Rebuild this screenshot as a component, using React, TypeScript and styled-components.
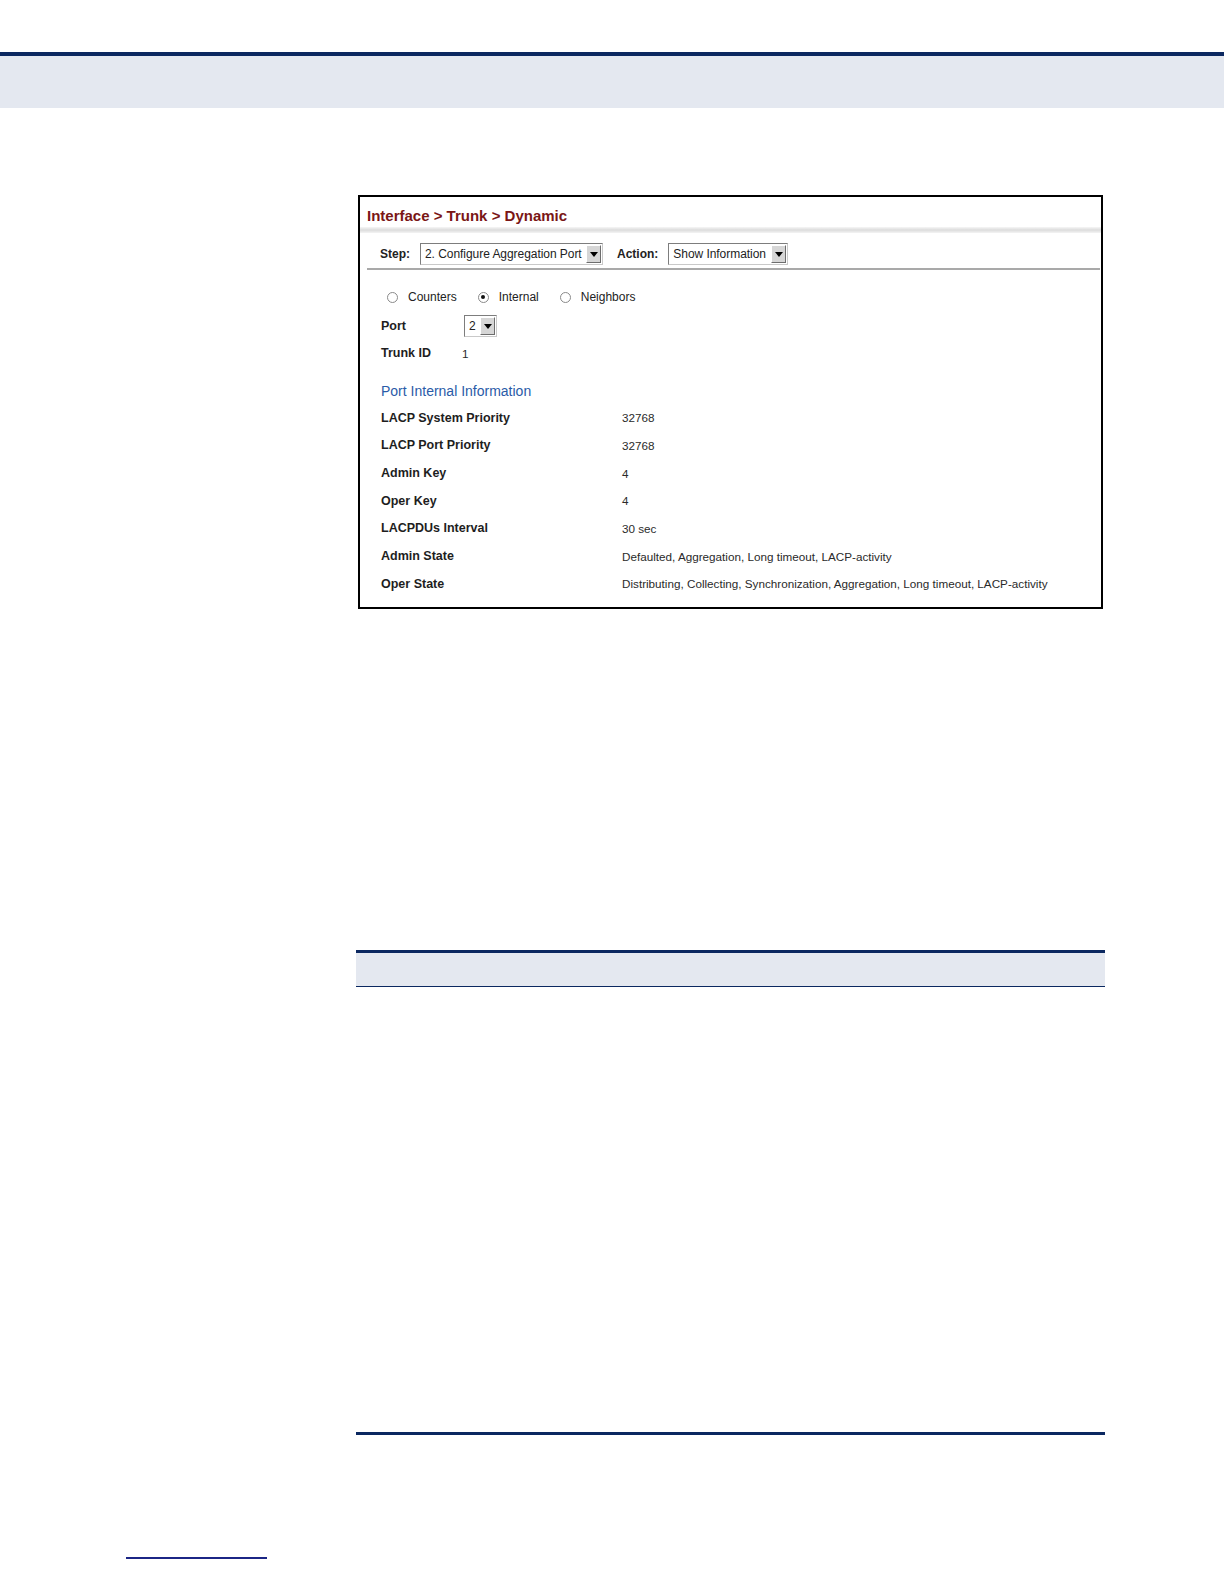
import React from "react";
import styled, { createGlobalStyle } from "styled-components";

const GlobalStyle = createGlobalStyle`
  html, body {
    margin: 0;
    padding: 0;
    background: #ffffff;
  }
  body {
    font-family: "Liberation Sans", Arial, sans-serif;
    color: #1a1a1a;
  }
`;

const Page = styled.div`
  width: 1224px;
  padding-top: 52px;
`;

const HeaderBand = styled.div`
  height: 52px;
  border-top: 4px solid #0b2860;
  background: #e4e8f0;
`;

const Body = styled.div`
  padding-left: 358px;
  padding-top: 87px;
`;

const Shot = styled.div`
  width: 745px;
  height: 414px;
  box-sizing: border-box;
  border: 2px solid #000;
  background: #fff;
  overflow: hidden;
`;

const TitleBar = styled.div`
  height: 30px;
  padding: 10px 0 0 7px;
  box-sizing: border-box;
  font-size: 15px;
  line-height: 17px;
  font-weight: bold;
  color: #7a1616;
`;

const Shade = styled.div`
  height: 6px;
  background: linear-gradient(#f6f6f6, #dcdcdc 50%, #f4f4f4);
`;

const Toolbar = styled.div`
  display: flex;
  align-items: center;
  height: 22px;
  margin: 0 1px 0 7px;
  padding: 10px 0 3px 13px;
  border-bottom: 2px solid #a9a9a9;
  gap: 6px;
`;

const ToolLabel = styled.span<{ $gap?: number }>`
  font-size: 12px;
  font-weight: bold;
  color: #222;
  margin-left: ${(p) => p.$gap ?? 0}px;
  margin-right: 4px;
`;

const Select = styled.div<{ $w: number }>`
  width: ${(p) => p.$w}px;
  height: 22px;
  box-sizing: border-box;
  display: flex;
  align-items: stretch;
  border: 1px solid #7d7d7d;
  border-right-color: #c9c9c9;
  border-bottom-color: #c9c9c9;
  background: #fff;
`;

const SelectText = styled.span`
  flex: 1;
  font-size: 12px;
  line-height: 20px;
  padding-left: 4px;
  color: #222;
  white-space: nowrap;
  overflow: hidden;
  letter-spacing: -0.05px;
`;

const ArrowBtn = styled.span`
  width: 15px;
  margin: 1px;
  box-sizing: border-box;
  background: #d6d6d6;
  border: 1px solid #fff;
  border-right-color: #6d6d6d;
  border-bottom-color: #6d6d6d;
  display: flex;
  align-items: center;
  justify-content: center;
`;

const Content = styled.div`
  padding: 20px 0 0 21px;
`;

const RadioRow = styled.div`
  display: flex;
  align-items: center;
  height: 14px;
  padding-left: 6px;
  margin-bottom: 8px;
`;

const RadioItem = styled.label`
  display: flex;
  align-items: center;
  font-size: 12px;
  color: #222;
  margin-right: 21px;
`;

const RadioDot = styled.span<{ $on?: boolean }>`
  width: 11px;
  height: 11px;
  box-sizing: border-box;
  border-radius: 50%;
  border: 1px solid #8a8a8a;
  background: #fff;
  margin-right: 10px;
  display: flex;
  align-items: center;
  justify-content: center;
  &::after {
    content: "";
    width: 4px;
    height: 4px;
    border-radius: 50%;
    background: ${(p) => (p.$on ? "#111" : "transparent")};
  }
`;

const FieldRow = styled.div<{ $h: number }>`
  display: flex;
  align-items: center;
  height: ${(p) => p.$h}px;
`;

const FieldLabel = styled.span<{ $w: number }>`
  width: ${(p) => p.$w}px;
  flex-shrink: 0;
  font-size: 12.5px;
  font-weight: bold;
  color: #1e1e1e;
`;

const FieldValue = styled.span`
  font-size: 11.7px;
  color: #2a2a2a;
  white-space: nowrap;
`;

const SectionTitle = styled.div`
  font-size: 14px;
  line-height: 16px;
  color: #2a5ba8;
  margin: 17px 0 5px;
`;

const Band = styled.div`
  margin: 341px 0 0 -2px;
  width: 749px;
  height: 33px;
  border-top: 3px solid #0b2860;
  border-bottom: 1px solid #0b2860;
  background: #e4e8f0;
`;

const EndRule = styled.div`
  margin: 445px 0 0 -2px;
  width: 749px;
  height: 3px;
  background: #0b2860;
`;

const FootRule = styled.div`
  margin: 122px 0 0 126px;
  width: 141px;
  height: 2px;
  background: #1b2585;
`;

const Arrow = () => (
  <svg width="8" height="5" viewBox="0 0 8 5">
    <path d="M0 0H8L4 5Z" fill="#000" />
  </svg>
);

const info: [string, string][] = [
  ["LACP System Priority", "32768"],
  ["LACP Port Priority", "32768"],
  ["Admin Key", "4"],
  ["Oper Key", "4"],
  ["LACPDUs Interval", "30 sec"],
  ["Admin State", "Defaulted, Aggregation, Long timeout, LACP-activity"],
  [
    "Oper State",
    "Distributing, Collecting, Synchronization, Aggregation, Long timeout, LACP-activity",
  ],
];

export default function App() {
  return (
    <Page>
      <GlobalStyle />
      <HeaderBand />
      <Body>
        <Shot>
          <TitleBar>Interface &gt; Trunk &gt; Dynamic</TitleBar>
          <Shade />
          <Toolbar>
            <ToolLabel>Step:</ToolLabel>
            <Select $w={183}>
              <SelectText>2. Configure Aggregation Port</SelectText>
              <ArrowBtn>
                <Arrow />
              </ArrowBtn>
            </Select>
            <ToolLabel $gap={8}>Action:</ToolLabel>
            <Select $w={120}>
              <SelectText>Show Information</SelectText>
              <ArrowBtn>
                <Arrow />
              </ArrowBtn>
            </Select>
          </Toolbar>
          <Content>
            <RadioRow>
              <RadioItem>
                <RadioDot />
                Counters
              </RadioItem>
              <RadioItem>
                <RadioDot $on />
                Internal
              </RadioItem>
              <RadioItem>
                <RadioDot />
                Neighbors
              </RadioItem>
            </RadioRow>
            <FieldRow $h={28}>
              <FieldLabel $w={83}>Port</FieldLabel>
              <Select $w={33}>
                <SelectText>2</SelectText>
                <ArrowBtn>
                  <Arrow />
                </ArrowBtn>
              </Select>
            </FieldRow>
            <FieldRow $h={26}>
              <FieldLabel $w={81}>Trunk ID</FieldLabel>
              <FieldValue>1</FieldValue>
            </FieldRow>
            <SectionTitle>Port Internal Information</SectionTitle>
            {info.map(([k, v]) => (
              <FieldRow key={k} $h={27.67}>
                <FieldLabel $w={241}>{k}</FieldLabel>
                <FieldValue>{v}</FieldValue>
              </FieldRow>
            ))}
          </Content>
        </Shot>
        <Band />
        <EndRule />
      </Body>
      <FootRule />
    </Page>
  );
}
